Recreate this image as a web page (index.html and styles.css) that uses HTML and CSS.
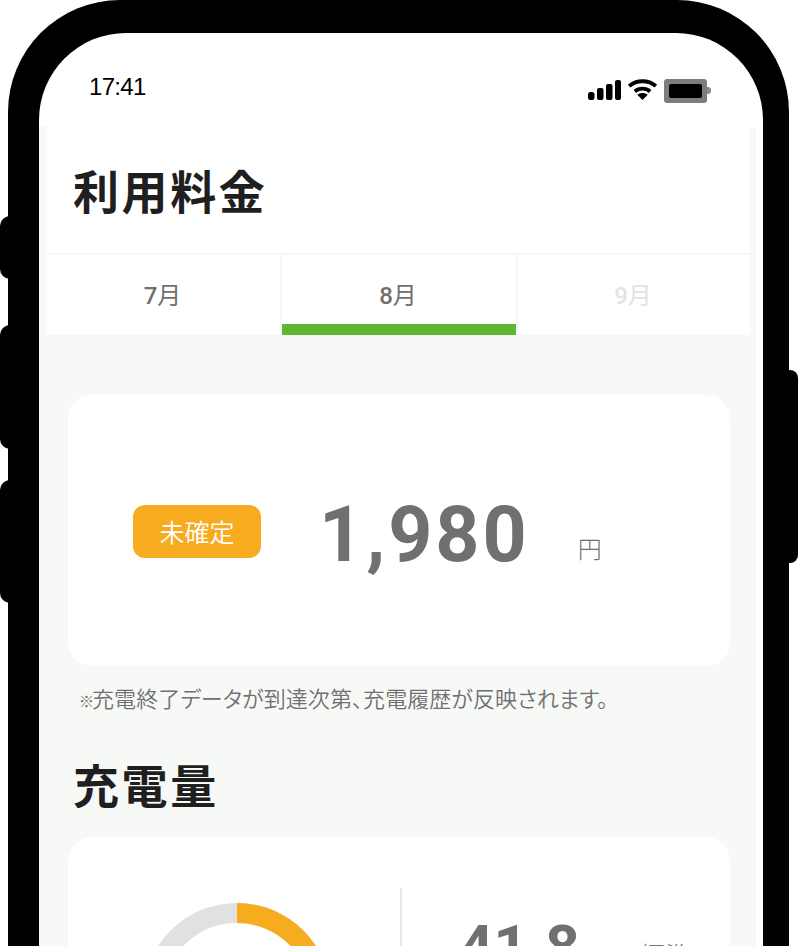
FILE: index.html
```html
<!DOCTYPE html>
<html lang="ja">
<head>
    <meta charset="UTF-8">
    <title>利用料金</title>
    <link rel="stylesheet" href="styles.css">
</head>

<body>
<div class="device">
    <span class="side-btn side-left btn-mute"></span>
    <span class="side-btn side-left btn-up"></span>
    <span class="side-btn side-left btn-down"></span>
    <span class="side-btn side-right btn-power"></span>

    <div class="screen">
        <div class="status">
            <span class="clock">17:41</span>
            <div class="status-icons">
                <svg class="ico-signal" width="33" height="20" viewBox="0 0 33 20">
                    <rect x="0" y="12" width="6.5" height="8" rx="2.5"/>
                    <rect x="9" y="8" width="6.5" height="12" rx="2"/>
                    <rect x="18" y="4" width="6.5" height="16" rx="2"/>
                    <rect x="27" y="0" width="6" height="20" rx="2"/>
                </svg>
                <svg class="ico-wifi" width="29" height="21" viewBox="0 0 30 22">
                    <path d="M1 7.5C8.8 .6 21.2 .6 29 7.5" fill="none" stroke="#000" stroke-width="4"/>
                    <path d="M7 13C11.6 9.2 18.4 9.2 23 13" fill="none" stroke="#000" stroke-width="4"/>
                    <path d="M9.5 16.5C12.7 14 17.3 14 20.5 16.5L15 22Z"/>
                </svg>
                <div class="battery"><span class="battery-fill"></span></div>
            </div>
        </div>

        <div class="main">
            <div class="head">
                <h1 class="title">利用料金</h1>
                <ul class="tabs">
                    <li><b>7</b>月</li>
                    <li class="selected"><b>8</b>月</li>
                    <li class="off"><b>9</b>月</li>
                </ul>
            </div>

            <div class="body">
                <div class="card card-fee">
                    <span class="badge">未確定</span>
                    <span class="amount">1,980</span>
                    <span class="unit">円</span>
                </div>
                <p class="note"><small>※</small>充電終了データが到達次第、充電履歴が反映されます。</p>

                <h2 class="title title-sub">充電量</h2>
                <div class="card card-charge">
                    <div class="donut-box">
                        <svg width="188" height="188" viewBox="0 0 188 188">
                            <circle cx="94" cy="94" r="84" fill="none" stroke="#e1e1e1" stroke-width="20"/>
                            <path d="M94 10A84 84 0 0 1 172 63" fill="none" stroke="#f7ab1e" stroke-width="20"/>
                        </svg>
                    </div>
                    <span class="divider"></span>
                    <div class="charge-num">
                        <span class="amount">41.8</span>
                        <span class="charge-unit">標準</span>
                    </div>
                </div>
            </div>
        </div>
    </div>
</div>
</body>
</html>
```

FILE: styles.css
```css
*{
    margin:0;
    padding:0;
    box-sizing:border-box;
}
ul,ol{
    list-style: none;
}
html,body{
    height: 946px;
    overflow: hidden;
    background: #fff;
}
body{
    font-family: "Noto Sans CJK JP", "Noto Sans", sans-serif;
}

.device{
    position: relative;
    width: 781px;
    height: 946px;
    margin-left: 8px;
    padding: 33px 26px 0 31px;
    background: #000;
    border-radius: 112px 112px 0 0;
}
.side-btn{
    position: absolute;
    background: #000;
    width: 12px;
}
.side-left{
    left: -8px;
    border-radius: 10px 0 0 10px;
}
.side-right{
    right: -9px;
    border-radius: 0 8px 8px 0;
}
.btn-mute{ top: 216px; height: 63px; }
.btn-up{ top: 325px; height: 124px; }
.btn-down{ top: 480px; height: 123px; }
.btn-power{ top: 370px; height: 193px; }

.screen{
    height: 913px;
    background: #fff;
    border-radius: 87px 87px 0 0;
    overflow: hidden;
}

.status{
    height: 94px;
    display: flex;
    justify-content: space-between;
    padding: 41px 56px 0 50px;
}
.clock{
    font-family: "Liberation Sans", sans-serif;
    font-size: 24px;
    line-height: 26px;
    letter-spacing: -0.7px;
    color: #000;
}
.status-icons{
    display: flex;
    gap: 7px;
    height: 30px;
    align-items: flex-start;
}
.ico-signal{ margin-top: 6px; }
.ico-wifi{ margin-top: 5px; }
.battery{
    position: relative;
    width: 43px;
    height: 24px;
    margin-top: 5px;
    padding: 5px;
    background: #7d7d7d;
    border-radius: 3px;
}
.battery:after{
    content: "";
    position: absolute;
    right: -4px;
    top: 8px;
    width: 4px;
    height: 7px;
    background: #8a8a8a;
    border-radius: 0 3px 3px 0;
}
.battery-fill{
    display: block;
    height: 14px;
    background: #000;
    border-radius: 2px;
}

.main{
    height: 819px;
    background: linear-gradient(#f7f9f7, #f7f9f7) no-repeat 0 0 / 717px 100%;
}
.head{
    margin-left: 8px;
    margin-right: 13px;
    background: #fff;
}
.title{
    font-size: 46px;
    line-height: 60px;
    font-weight: 700;
    letter-spacing: 2.6px;
    color: #1f1f1f;
}
.head .title{
    height: 126px;
    padding: 32px 0 0 26px;
}
.tabs{
    display: flex;
    height: 82px;
    border-top: 2px solid #f5f6f5;
}
.tabs li{
    position: relative;
    flex: none;
    width: 232px;
    padding-right: 2px;
    font-family: Roboto, "Noto Sans CJK JP", sans-serif;
    font-size: 24px;
    font-weight: 400;
    line-height: 83px;
    text-align: center;
    color: #707070;
}
.tabs li b{
    font-weight: 500;
}
.tabs li:first-child{
    width: 233px;
}
.tabs li.selected{
    width: 238px;
    border-left: 2px solid #f5f6f5;
    border-right: 2px solid #f5f6f5;
}
.tabs li.selected:after{
    content: "";
    position: absolute;
    left: 0;
    right: 0;
    bottom: 0;
    height: 11px;
    background: #5fb731;
}
.tabs li.off{
    color: #e3e3e3;
}

.body{
    padding: 60px 26px 0 29px;
}
.card{
    background: #fff;
    border-radius: 24px;
    width: 662px;
}
.card-fee{
    height: 271px;
    display: flex;
    align-items: center;
    padding: 1px 0 0 65px;
}
.badge{
    width: 128px;
    height: 53px;
    background: #f7ab1e;
    border-radius: 12px;
    font-size: 25px;
    font-weight: 350;
    line-height: 52px;
    text-align: center;
    color: #fff;
}
.amount{
    font-family: Roboto, sans-serif;
    font-size: 77px;
    font-weight: 700;
    letter-spacing: 3px;
    color: #707070;
}
.card-fee .amount{
    margin: 8px 0 0 58px;
    line-height: 100px;
}
.unit{
    margin-left: 48px;
    margin-top: 33px;
    font-size: 24px;
    font-weight: 300;
    color: #707070;
}
.note{
    margin: 15px 0 0 11px;
    font-size: 22px;
    line-height: 32px;
    font-weight: 350;
    font-feature-settings: "palt";
    letter-spacing: 0.08px;
    white-space: nowrap;
    color: #707070;
}
.note small{
    font-size: 15px;
    font-weight: 700;
    letter-spacing: -2px;
}
.title-sub{
    margin: 36px 0 0 5px;
}
.card-charge{
    margin-top: 24px;
    height: 300px;
    display: flex;
}
.donut-box{
    flex: none;
    width: 332px;
    padding: 66px 0 0 75px;
}
.divider{
    flex: none;
    width: 2px;
    height: 200px;
    margin-top: 51px;
    background: #e6e6e6;
}
.charge-num{
    flex: none;
    display: flex;
    padding: 60px 0 0 57px;
    align-items: flex-start;
}
.charge-num .amount{
    font-size: 60px;
    line-height: 100px;
    letter-spacing: 0;
}
.charge-unit{
    margin: 41px 0 0 60px;
    font-size: 25px;
    line-height: 32px;
    font-weight: 300;
    color: #707070;
}
```
